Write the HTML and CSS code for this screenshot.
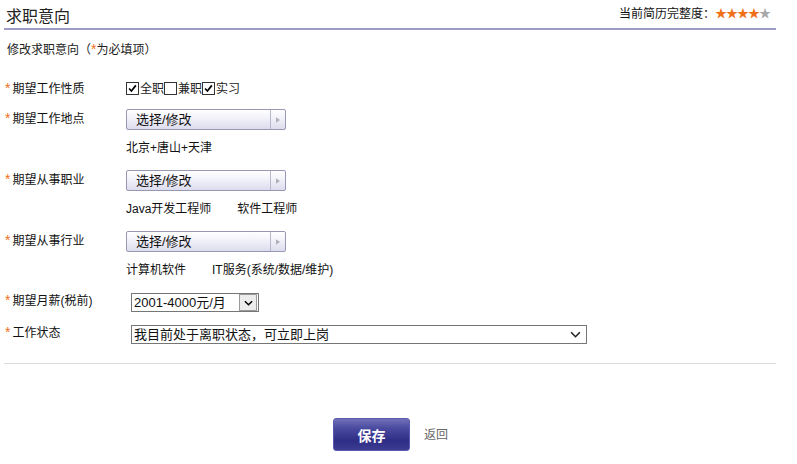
FILE: index.html
```html
<!DOCTYPE html>
<html lang="zh">
<head>
<meta charset="utf-8">
<title>求职意向</title>
<link rel="stylesheet" href="styles.css">
</head>
<body>
<div class="page">
  <div class="head">
    <h1 class="title">求职意向</h1>
    <div class="score">当前简历完整度：<span class="stars"><span class="on">★★★★</span><span class="off">★</span></span></div>
  </div>
  <p class="intro">修改求职意向（<span class="req">*</span>为必填项）</p>

  <div class="field field-first">
    <div class="label"><span class="req">*</span>期望工作性质</div>
    <div class="ctrl checks">
      <span class="cb on"><svg viewBox="0 0 13 13"><path d="M2.5 6.5 L5.2 9.5 L10.5 2.8" fill="none" stroke="#000" stroke-width="2"/></svg></span>全职<span class="cb"></span>兼职<span class="cb on"><svg viewBox="0 0 13 13"><path d="M2.5 6.5 L5.2 9.5 L10.5 2.8" fill="none" stroke="#000" stroke-width="2"/></svg></span>实习
    </div>
  </div>

  <div class="field field-second">
    <div class="label"><span class="req">*</span>期望工作地点</div>
    <div class="ctrl">
      <div class="pick"><span class="pick-text">选择/修改</span><span class="pick-arr"><svg viewBox="0 0 5 7"><path d="M0 0 L5 3.5 L0 7 Z" fill="#b0b0b8"/></svg></span></div>
      <div class="chosen">北京+唐山+天津</div>
    </div>
  </div>

  <div class="field">
    <div class="label"><span class="req">*</span>期望从事职业</div>
    <div class="ctrl">
      <div class="pick"><span class="pick-text">选择/修改</span><span class="pick-arr"><svg viewBox="0 0 5 7"><path d="M0 0 L5 3.5 L0 7 Z" fill="#b0b0b8"/></svg></span></div>
      <div class="chosen"><span>Java开发工程师</span><span>软件工程师</span></div>
    </div>
  </div>

  <div class="field">
    <div class="label"><span class="req">*</span>期望从事行业</div>
    <div class="ctrl">
      <div class="pick"><span class="pick-text">选择/修改</span><span class="pick-arr"><svg viewBox="0 0 5 7"><path d="M0 0 L5 3.5 L0 7 Z" fill="#b0b0b8"/></svg></span></div>
      <div class="chosen"><span>计算机软件</span><span>IT服务(系统/数据/维护)</span></div>
    </div>
  </div>

  <div class="field sel-field sel-first">
    <div class="label"><span class="req">*</span>期望月薪(税前)</div>
    <div class="ctrl">
      <div class="sel sel-salary"><span class="sel-text">2001-4000元/月</span><span class="sel-btn"><svg viewBox="0 0 10 6"><path d="M1 1 L5 5 L9 1" fill="none" stroke="#000" stroke-width="1.6"/></svg></span></div>
    </div>
  </div>

  <div class="field sel-field">
    <div class="label"><span class="req">*</span>工作状态</div>
    <div class="ctrl">
      <div class="sel sel-status"><span class="sel-text">我目前处于离职状态，可立即上岗</span><span class="sel-chev"><svg viewBox="0 0 12 8"><path d="M1 1.5 L6 6.5 L11 1.5" fill="none" stroke="#222" stroke-width="1.8"/></svg></span></div>
    </div>
  </div>

  <hr class="sep">

  <div class="actions">
    <button class="save" type="button">保存</button>
    <a class="back" href="#">返回</a>
  </div>
</div>
</body>
</html>
```

FILE: styles.css
```css
html, body {
  margin: 0;
  padding: 0;
  background: #fff;
}
body {
  font-family: "Liberation Sans", "Noto Sans CJK SC", sans-serif;
  font-size: 12px;
  color: #222;
}
.page {
  width: 772px;
  padding-left: 4px;
}
.head {
  height: 28px;
  border-bottom: 2px solid #9c9cc4;
  display: flex;
  justify-content: space-between;
  align-items: flex-start;
}
.title {
  margin: 0;
  padding: 7px 0 0 2px;
  font-size: 16px;
  font-weight: normal;
  line-height: 20px;
  color: #222;
}
.score {
  padding: 5px 6px 0 0;
  line-height: 18px;
  color: #111;
}
.stars { font-size: 12px; letter-spacing: -1px; }
.stars .on { color: #f07018; }
.stars .off { color: #a8a8a8; }
.intro {
  margin: 10px 0 0 3px;
  line-height: 18px;
  color: #222;
}
.req { color: #f07018; font-size: 14px; }
.field {
  display: flex;
  margin-top: 13px;
}
.field-first { margin-top: 20px; }
.field-second { margin-top: 11px; }
.label {
  width: 121px;
  padding-left: 1px;
  line-height: 18px;
  flex: none;
  color: #111;
}
.label .req { margin-right: 2px; line-height: 18px; }
.ctrl { display: flex; flex-direction: column; align-items: flex-start; }
.checks {
  flex-direction: row;
  align-items: center;
  line-height: 18px;
}
.cb {
  width: 11px;
  height: 11px;
  border: 1px solid #333;
  background: #fff;
  display: inline-flex;
  margin-right: 1px;
}
.cb svg { width: 11px; height: 11px; }
.pick {
  width: 158px;
  height: 19px;
  border: 1px solid #9898b4;
  border-radius: 2px;
  background: linear-gradient(#ffffff, #f3f3fa 40%, #dcdcee);
  display: flex;
}
.pick-text {
  flex: 1;
  padding-left: 9px;
  line-height: 19px;
  font-size: 13px;
  color: #111;
}
.pick-arr {
  width: 14px;
  border-left: 1px solid #b8b8cc;
  display: flex;
  align-items: center;
  justify-content: center;
}
.pick-arr svg { width: 4px; height: 6px; }
.chosen {
  margin-top: 9px;
  line-height: 18px;
  color: #111;
  display: flex;
  gap: 26px;
}
.sel-field .label { margin-top: -2px; }
.sel-first { margin-top: 14px; }
.sel {
  margin-left: 5px;
  height: 17px;
  border: 1px solid #767676;
  display: flex;
  align-items: center;
  background: #fff;
}
.sel-text {
  flex: 1;
  padding-left: 2px;
  font-size: 13px;
  line-height: 17px;
  color: #111;
}
.sel-salary { width: 126px; }
.sel-btn {
  width: 16px;
  height: 15px;
  border: 1px solid #9a9a9a;
  background: #ececec;
  margin-right: 1px;
  display: flex;
  align-items: center;
  justify-content: center;
}
.sel-btn svg { width: 9px; height: 6px; }
.sel-status { width: 454px; }
.sel-chev {
  width: 16px;
  margin-right: 3px;
  display: flex;
  align-items: center;
  justify-content: center;
}
.sel-chev svg { width: 11px; height: 7px; }
.sep {
  margin: 19px 0 0 0;
  border: 0;
  border-top: 1px solid #dcdcdc;
  height: 0;
  width: 772px;
}
.actions {
  display: flex;
  align-items: center;
  margin-top: 54px;
  padding-left: 329px;
}
.save {
  width: 77px;
  height: 33px;
  border: 1px solid #5a5ab0;
  border-radius: 3px;
  background: linear-gradient(#7070b8, #4a4aa0 30%, #2e2e86 70%, #3c3c92);
  color: #fff;
  font-family: "Noto Sans CJK SC", sans-serif;
  font-size: 14px;
  font-weight: bold;
  padding: 0;
  cursor: pointer;
}
.back {
  margin-left: 14px;
  color: #666;
  text-decoration: none;
  margin-top: -2px;
}
```
